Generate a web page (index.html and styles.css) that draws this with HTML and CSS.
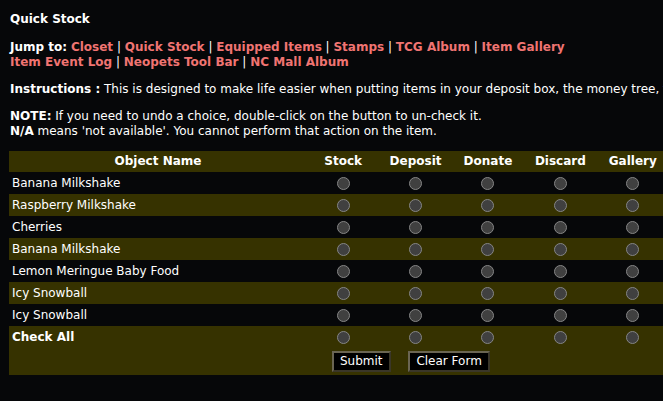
FILE: index.html
```html
<!DOCTYPE html>
<html lang="en">
<head>
    <meta charset="UTF-8">
    <link rel="stylesheet" href="styles.css">
    <title>Quick Stock</title>
</head>
<body>
    <div class="page">
        <h1 class="title">Quick Stock</h1>

        <p class="jump">
            <b>Jump to:</b> <a href="#">Closet</a> | <a href="#">Quick Stock</a> | <a href="#">Equipped Items</a> | <a href="#">Stamps</a> | <a href="#">TCG Album</a> | <a href="#">Item Gallery</a><br>
            <a href="#">Item Event Log</a> | <a href="#">Neopets Tool Bar</a> | <a href="#">NC Mall Album</a>
        </p>

        <p class="info"><b>Instructions :</b> This is designed to make life easier when putting items in your deposit box, the money tree, the trading post and more.</p>

        <p class="info"><b>NOTE:</b> If you need to undo a choice, double-click on the button to un-check it.<br>
        <b>N/A</b> means 'not available'. You cannot perform that action on the item.</p>

        <form class="stock">
            <table class="stock-table">
                <colgroup>
                    <col class="col-name">
                    <col><col><col><col><col>
                </colgroup>
                <tr class="head">
                    <th>Object Name</th>
                    <th>Stock</th>
                    <th>Deposit</th>
                    <th>Donate</th>
                    <th>Discard</th>
                    <th>Gallery</th>
                </tr>
                <tr class="dark">
                    <td class="name">Banana Milkshake</td>
                    <td><input type="radio" name="r1"></td><td><input type="radio" name="r1"></td><td><input type="radio" name="r1"></td><td><input type="radio" name="r1"></td><td><input type="radio" name="r1"></td>
                </tr>
                <tr class="olive">
                    <td class="name">Raspberry Milkshake</td>
                    <td><input type="radio" name="r2"></td><td><input type="radio" name="r2"></td><td><input type="radio" name="r2"></td><td><input type="radio" name="r2"></td><td><input type="radio" name="r2"></td>
                </tr>
                <tr class="dark">
                    <td class="name">Cherries</td>
                    <td><input type="radio" name="r3"></td><td><input type="radio" name="r3"></td><td><input type="radio" name="r3"></td><td><input type="radio" name="r3"></td><td><input type="radio" name="r3"></td>
                </tr>
                <tr class="olive">
                    <td class="name">Banana Milkshake</td>
                    <td><input type="radio" name="r4"></td><td><input type="radio" name="r4"></td><td><input type="radio" name="r4"></td><td><input type="radio" name="r4"></td><td><input type="radio" name="r4"></td>
                </tr>
                <tr class="dark">
                    <td class="name">Lemon Meringue Baby Food</td>
                    <td><input type="radio" name="r5"></td><td><input type="radio" name="r5"></td><td><input type="radio" name="r5"></td><td><input type="radio" name="r5"></td><td><input type="radio" name="r5"></td>
                </tr>
                <tr class="olive">
                    <td class="name">Icy Snowball</td>
                    <td><input type="radio" name="r6"></td><td><input type="radio" name="r6"></td><td><input type="radio" name="r6"></td><td><input type="radio" name="r6"></td><td><input type="radio" name="r6"></td>
                </tr>
                <tr class="dark">
                    <td class="name">Icy Snowball</td>
                    <td><input type="radio" name="r7"></td><td><input type="radio" name="r7"></td><td><input type="radio" name="r7"></td><td><input type="radio" name="r7"></td><td><input type="radio" name="r7"></td>
                </tr>
                <tr class="olive">
                    <td class="name check-all"><b>Check All</b></td>
                    <td><input type="radio" name="all"></td><td><input type="radio" name="all"></td><td><input type="radio" name="all"></td><td><input type="radio" name="all"></td><td><input type="radio" name="all"></td>
                </tr>
                <tr class="olive">
                    <td colspan="6" class="buttons">
                        <button type="submit" class="btn">Submit</button>
                        <button type="reset" class="btn">Clear Form</button>
                    </td>
                </tr>
            </table>
        </form>
    </div>
</body>
</html>
```

FILE: styles.css
```css
*{
    margin: 0;
    padding: 0;
    box-sizing: border-box;
}
body{
    background-color: #060709;
    color: #ffffff;
    font-family: 'DejaVu Sans', Verdana, sans-serif;
    font-size: 12px;
    line-height: 15px;
    overflow: hidden;
}
.page{
    padding: 12px 0 0 10px;
    width: 700px;
}
.title{
    font-size: 12px;
    font-weight: bold;
    margin-bottom: 13px;
}
.jump{
    margin-bottom: 12px;
}
.jump a{
    color: #f07472;
    font-weight: bold;
    text-decoration: none;
}
.info{
    margin-bottom: 12px;
    white-space: nowrap;
}
.stock{
    margin-left: -1px;
    margin-top: 11px;
}
.stock-table{
    border-collapse: collapse;
    table-layout: fixed;
    width: 660px;
}
.col-name{
    width: 298px;
}
.stock-table th{
    height: 21px;
    font-weight: bold;
    text-align: center;
    background-color: #363200;
}
.stock-table td{
    height: 22px;
    text-align: center;
    vertical-align: middle;
}
.stock-table td.name{
    text-align: left;
    padding-left: 3px;
}
.dark{
    background-color: #060709;
}
.olive{
    background-color: #363200;
}
.check-all{
    vertical-align: top;
}
.stock-table input{
    appearance: none;
    width: 13px;
    height: 13px;
    border-radius: 50%;
    background-color: #404040;
    border: 1px solid #858585;
    display: block;
    margin: 1px auto 0;
}
.stock-table td.buttons{
    height: 27px;
    text-align: left;
    padding: 3px 0 0 323px;
    vertical-align: top;
}
.btn{
    background-color: #000000;
    color: #ffffff;
    font-family: 'DejaVu Sans', Verdana, sans-serif;
    font-size: 12px;
    line-height: 15px;
    padding: 1px 6px;
    border: 2px solid #6a6552;
    border-right-color: #3a3628;
    border-bottom-color: #3a3628;
    margin-right: 14px;
}
```
